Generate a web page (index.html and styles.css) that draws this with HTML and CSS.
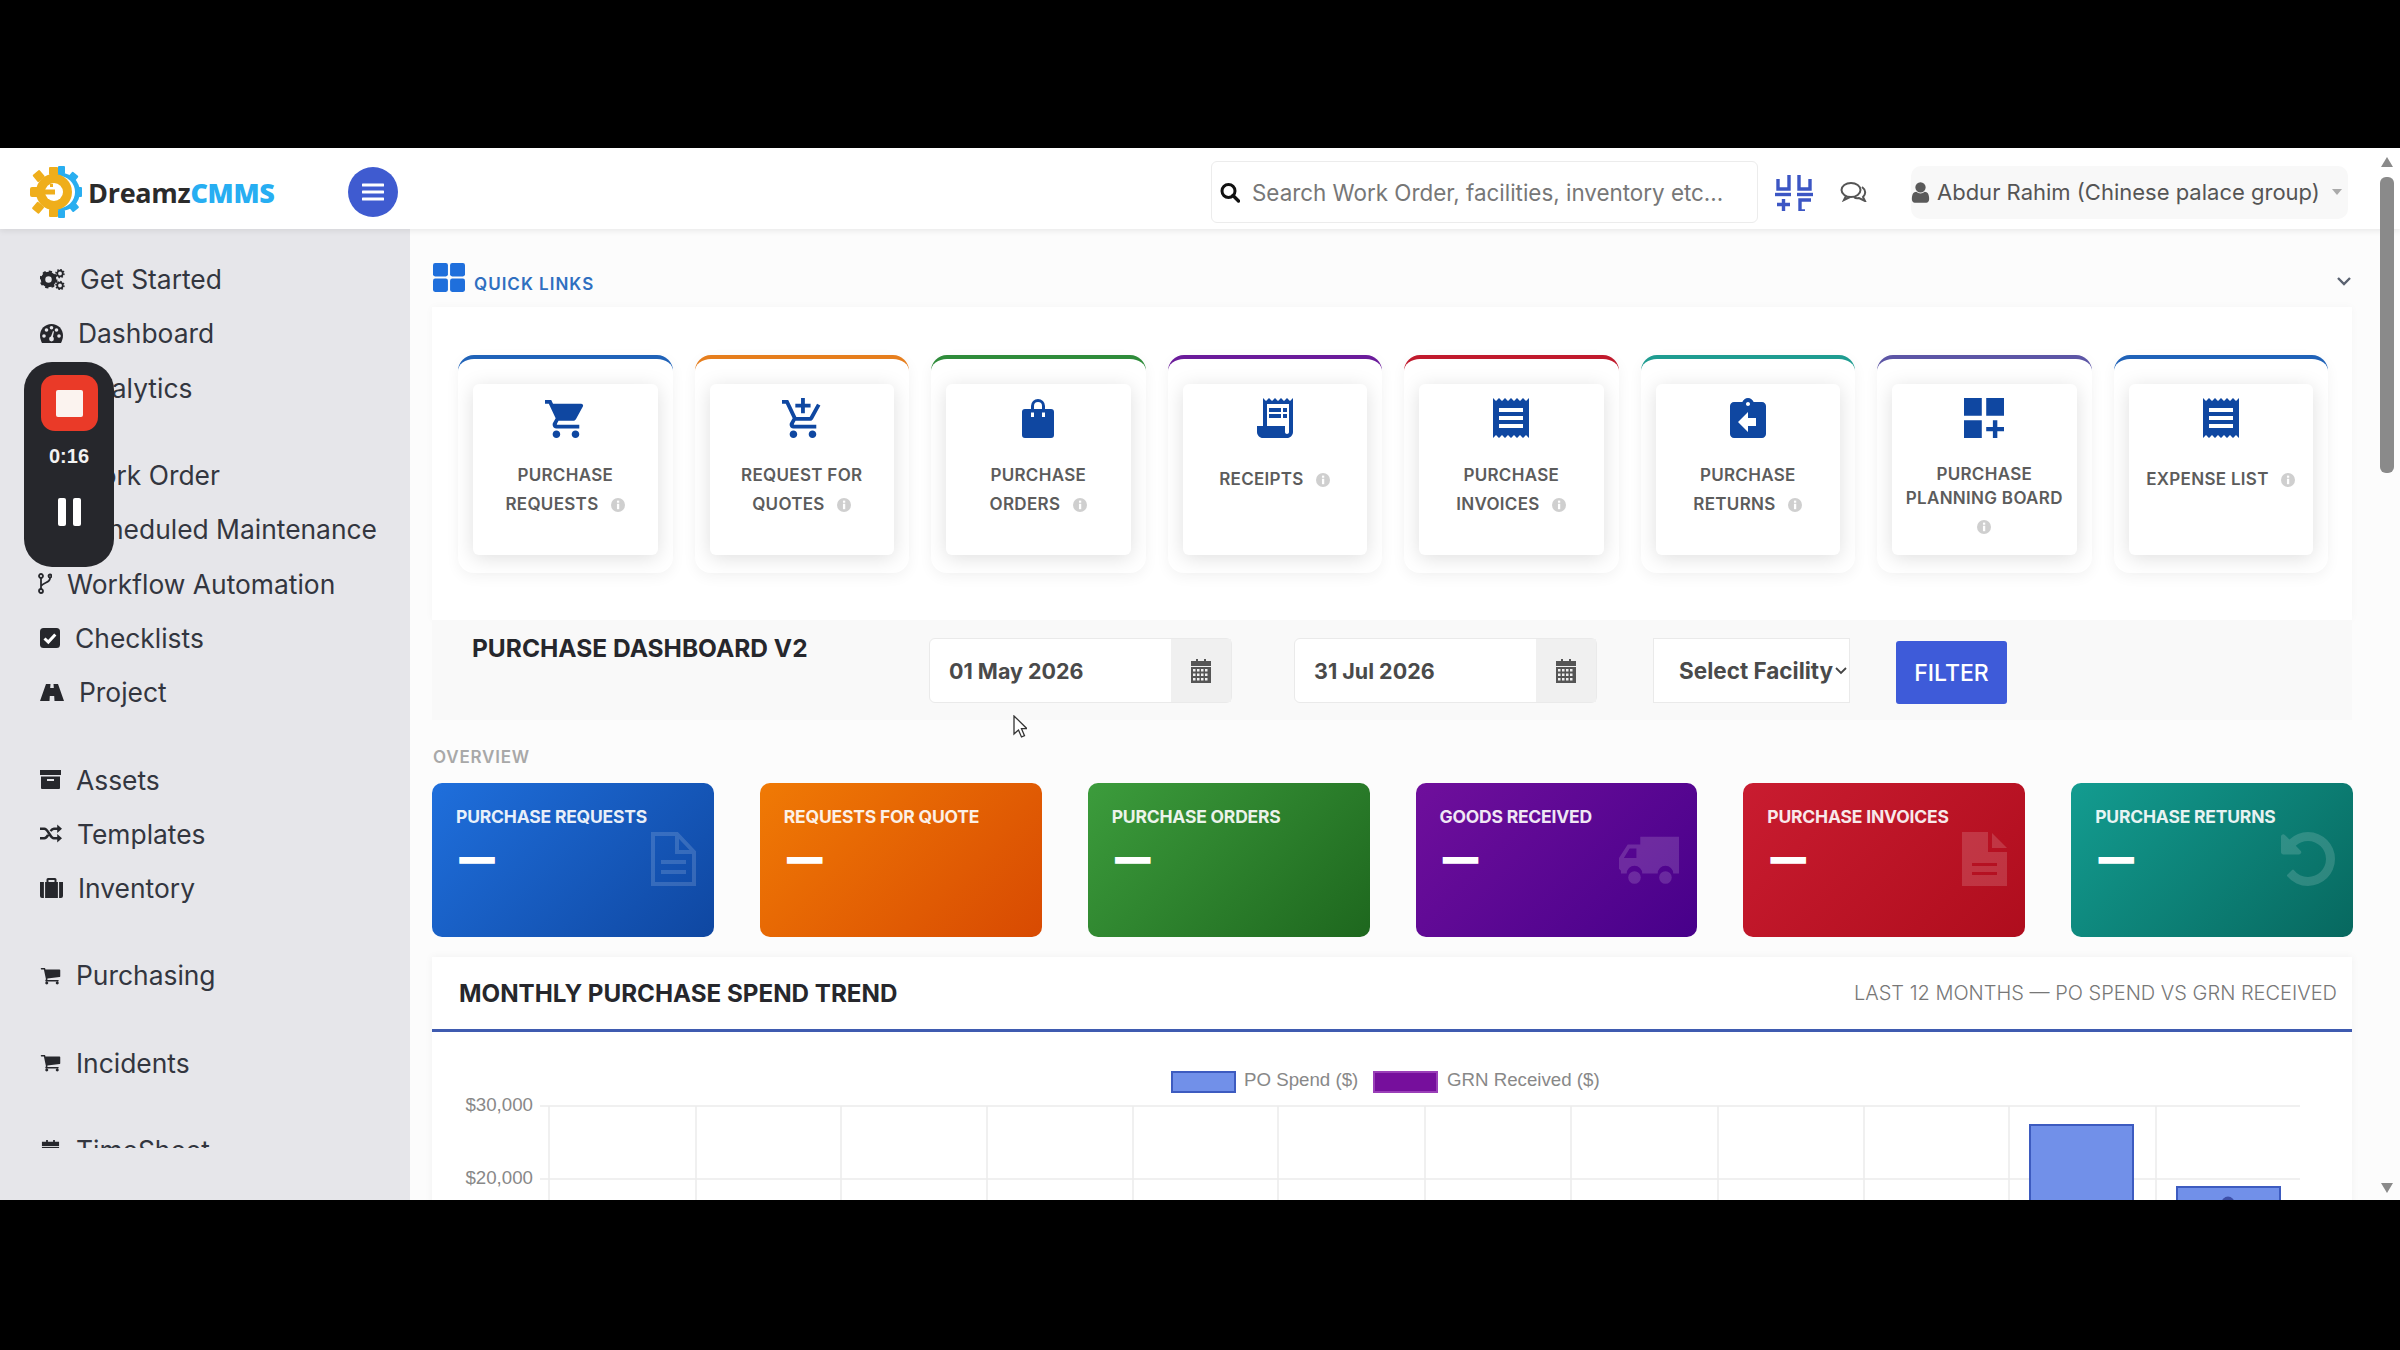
FILE: index.html
```html
<!DOCTYPE html>
<html lang="en">
<head>
  <meta charset="UTF-8" />
  <title>Purchase Dashboard</title>
  <link rel="stylesheet" href="styles.css">
</head>
<body>
  <svg class="sprite" width="0" height="0">
    <symbol id="i-info" viewBox="0 0 16 16">
      <circle cx="8" cy="8" r="8" fill="#cfcfcf"/>
      <rect x="6.8" y="3" width="2.6" height="2.4" fill="#fff"/>
      <rect x="6.8" y="6.6" width="2.6" height="6.2" fill="#fff"/>
    </symbol>
    <symbol id="i-receipt" viewBox="3 2 18 20">
      <path fill-rule="evenodd" d="M3 22l1.5-1.5L6 22l1.5-1.5L9 22l1.5-1.5L12 22l1.5-1.5L15 22l1.5-1.5L18 22l1.5-1.5L21 22V2l-1.5 1.5L18 2l-1.5 1.5L15 2l-1.5 1.5L12 2l-1.5 1.5L9 2 7.5 3.5 6 2 4.5 3.5 3 2v20zM18 7v2H6V7h12zm0 4v2H6v-2h12zm0 4v2H6v-2h12z"/>
    </symbol>
    <symbol id="i-cart" viewBox="0 0 1664 1792">
      <path d="M640 1536q0 52-38 90t-90 38-90-38-38-90 38-90 90-38 90 38 38 90zm896 0q0 52-38 90t-90 38-90-38-38-90 38-90 90-38 90 38 38 90zm128-1088v512q0 24-16.5 42.5t-40.5 21.5l-1044 122q13 60 13 70 0 16-24 64h920q26 0 45 19t19 45-19 45-45 19h-1024q-26 0-45-19t-19-45q0-11 8-31.5t16-36 21.5-40 15.5-29.5l-177-823h-204q-26 0-45-19t-19-45 19-45 45-19h256q16 0 28.5 6.5t19.5 15.5 13 24.5 8 26 5.5 29.5 4.5 26h1201q26 0 45 19t19 45z"/>
    </symbol>
    <symbol id="i-calendar" viewBox="0 0 20 24">
      <rect x="5" y="0" width="2" height="4"/>
      <rect x="13" y="0" width="2" height="4"/>
      <rect x="0" y="2" width="20" height="5"/>
      <path fill-rule="evenodd" d="M0 8h20v16H0zM2 10v2.500h2.500V10zm4 0v2.500h2.500V10zm4 0v2.500h2.500V10zm4 0v2.500h2.500V10zM2 14.500V17h2.500v-2.500zm4 0V17h2.500v-2.500zm4 0V17h2.500v-2.500zm4 0V17h2.500v-2.500zM2 19v2.500h2.500V19zm4 0v2.500h2.500V19zm4 0v2.500h2.500V19zm4 0v2.500h2.500V19z"/>
    </symbol>
  </svg>

  <div class="app">
    <header class="topbar">
      <div class="brand">
        <svg class="brand-mark" viewBox="0 0 52 52">
          <g fill="#29aef0">
            <circle cx="31" cy="26" r="19"/>
            <rect x="44" y="21" width="8" height="10" rx="1"/>
            <rect x="39" y="7" width="8" height="9" rx="1" transform="rotate(40 43 11)"/>
            <rect x="39" y="36" width="8" height="9" rx="1" transform="rotate(-40 43 40)"/>
            <rect x="28" y="0" width="7" height="8" rx="1"/>
            <rect x="28" y="44" width="7" height="8" rx="1"/>
          </g>
          <circle cx="29" cy="26" r="16" fill="#fff"/>
          <g fill="#efae1b">
            <circle cx="24" cy="26" r="18"/>
            <rect x="0" y="21" width="9" height="10" rx="2"/>
            <rect x="19" y="1" width="9" height="8" rx="1"/>
            <rect x="19" y="43" width="9" height="8" rx="1"/>
            <rect x="4" y="6" width="9" height="9" rx="1" transform="rotate(-40 8 10)"/>
            <rect x="4" y="37" width="9" height="9" rx="1" transform="rotate(40 8 41)"/>
          </g>
          <circle cx="24" cy="26" r="9" fill="#fff"/>
          <rect x="13" y="23.500" width="12" height="5" fill="#efae1b"/>
          <rect x="20" y="18" width="3" height="3" fill="#efae1b"/>
        </svg>
        <span class="brand-name">Dreamz<b>CMMS</b></span>
      </div>
      <button class="menu-toggle" type="button">
        <svg viewBox="0 0 22 18" width="22" height="18"><path d="M1 2h20M1 9h20M1 16h20" stroke="#fff" stroke-width="3" stroke-linecap="round"/></svg>
      </button>

      <div class="search-box">
        <svg class="search-icon" viewBox="0 0 20 20"><circle cx="8.500" cy="8.500" r="6.500" fill="none" stroke="#111" stroke-width="3"/><path d="M13 13l5.500 5.500" stroke="#111" stroke-width="3.400" stroke-linecap="round"/></svg>
        <span class="search-text">Search Work Order, facilities, inventory etc...</span>
      </div>

      <svg class="scan-icon" viewBox="0 0 38 37" fill="none" stroke="#3c56c4" stroke-width="3.400">
        <path d="M3 5v10h11V1"/>
        <path d="M24 1v14h11V5"/>
        <path d="M0 20.500h16"/>
        <path d="M22 20.500h16"/>
        <path d="M2 30.500h13M8.500 25v12"/>
        <path d="M36 26H25v11h5"/>
      </svg>
      <svg class="chat-icon" viewBox="0 0 28 20" fill="none" stroke="#555" stroke-width="2">
        <ellipse cx="11" cy="8" rx="9.500" ry="7"/>
        <path d="M6 14l-2 4 6-3"/>
        <path d="M22 5c4 3 4 7 1 10l2 4-6-3c-2 .5-4 0-5-1"/>
      </svg>

      <div class="user-menu">
        <svg class="user-icon" viewBox="192 128 1408 1536"><path fill="#5a5a5a" d="M1536 1399q0 109-62.500 187t-150.500 78h-854q-88 0-150.500-78t-62.500-187q0-85 8.500-160.500t31.500-151.500 58.500-130 94-88.500 134.500-34.500q131 128 313 128t313-128q76 0 134.500 34.500t94 88.500 58.500 130 31.500 151.500 8.500 160.500zm-256-887q0 159-112.500 271.500t-271.500 112.500-271.500-112.500-112.500-271.500 112.500-271.500 271.500-112.500 271.500 112.500 112.500 271.500z"/></svg>
        <span class="user-name">Abdur Rahim (Chinese palace group)</span>
        <span class="user-caret"></span>
      </div>
    </header>

    <div class="shell">
      <aside class="sidebar">
        <nav class="side-nav">
          <ul class="nav-group">
            <li>
              <svg class="nav-icon" width="25" height="21" viewBox="0 0 25 21">
                <circle cx="8.500" cy="10.500" r="5.500" fill="none" stroke="#26272c" stroke-width="4.500"/>
                <circle cx="8.500" cy="10.500" r="7.500" fill="none" stroke="#26272c" stroke-width="3" stroke-dasharray="3 2.900"/>
                <circle cx="20" cy="4.500" r="2.800" fill="none" stroke="#26272c" stroke-width="1.800"/>
                <circle cx="20" cy="4.500" r="4" fill="none" stroke="#26272c" stroke-width="1.500" stroke-dasharray="1.500 1.600"/>
                <circle cx="20" cy="16.500" r="2.800" fill="none" stroke="#26272c" stroke-width="1.800"/>
                <circle cx="20" cy="16.500" r="4" fill="none" stroke="#26272c" stroke-width="1.500" stroke-dasharray="1.500 1.600"/>
              </svg>
              Get Started
            </li>
            <li>
              <svg class="nav-icon" width="23" height="19" viewBox="0 0 23 19">
                <path fill="#26272c" d="M11.500 0C5 0 0 5 0 11.500c0 2.800.8 5 2 7.500h19c1.200-2.500 2-4.700 2-7.500C23 5 18 0 11.500 0z"/>
                <g fill="#e6e6ea">
                  <circle cx="4" cy="12" r="1.800"/><circle cx="6.500" cy="6" r="1.800"/><circle cx="11.500" cy="3.800" r="1.800"/><circle cx="16.500" cy="6" r="1.800"/><circle cx="19" cy="12" r="1.800"/>
                  <circle cx="11.500" cy="15" r="2.400"/>
                  <path d="M10.500 14l2.500-7 1 .4-1.500 7z"/>
                </g>
              </svg>
              Dashboard
            </li>
            <li>
              <svg class="nav-icon" width="23" height="19" viewBox="0 0 23 19"><path fill="#26272c" d="M1 0h3v19H1zM7 9h3v10H7zM13 4h3v15h-3zM19 11h3v8h-3z"/></svg>
              Analytics
            </li>
          </ul>

          <ul class="nav-group">
            <li>
              <svg class="nav-icon" width="21" height="21" viewBox="0 0 21 21"><rect x="1" y="3" width="19" height="18" fill="#26272c"/></svg>
              Work Order
            </li>
            <li>
              <svg class="nav-icon" width="21" height="21" viewBox="0 0 20 24" fill="#26272c"><use href="#i-calendar"/></svg>
              Scheduled Maintenance
            </li>
            <li class="nav-tight">
              <svg class="nav-icon" width="14" height="21" viewBox="0 0 14 21" fill="none" stroke="#26272c" stroke-width="1.800">
                <circle cx="3" cy="3" r="2"/><circle cx="3" cy="18" r="2"/><circle cx="12" cy="3" r="1.500"/>
                <path d="M3 5v11M12 5c0 5-6 4-9 8"/>
              </svg>
              Workflow Automation
            </li>
            <li>
              <svg class="nav-icon" width="20" height="20" viewBox="0 0 20 20">
                <rect width="20" height="20" rx="3.500" fill="#26272c"/>
                <path d="M4.500 10.500l3.800 3.600 7-7.600" fill="none" stroke="#fff" stroke-width="3"/>
              </svg>
              Checklists
            </li>
            <li>
              <svg class="nav-icon" width="24" height="17" viewBox="0 0 24 17">
                <path fill="#26272c" d="M6 0h4.500l-.3 4h3.600l-.3-4H18l6 17h-9.500l-.3-5h-4.400l-.3 5H0z"/>
              </svg>
              Project
            </li>
          </ul>

          <ul class="nav-group">
            <li>
              <svg class="nav-icon" width="21" height="19" viewBox="0 0 21 19">
                <rect width="21" height="5" fill="#26272c"/>
                <path fill="#26272c" d="M1 6.500h19V18a1 1 0 0 1-1 1H2a1 1 0 0 1-1-1z"/>
                <rect x="7" y="9" width="7" height="2" fill="#e6e6ea"/>
              </svg>
              Assets
            </li>
            <li>
              <svg class="nav-icon" width="22" height="19" viewBox="0 0 23 19" fill="none" stroke="#26272c" stroke-width="2.600">
                <path d="M0 4.500h4.500c4 0 6 10 10 10H19M0 14.500h4.500c1.600 0 3-1.600 4-3.500M11 7c1-1.400 2.200-2.500 3.500-2.500H19"/>
                <path fill="#26272c" stroke="none" d="M18 0l5 4.500-5 4.500zM18 10l5 4.500-5 4.500z"/>
              </svg>
              Templates
            </li>
            <li>
              <svg class="nav-icon" width="23" height="20" viewBox="0 0 23 20">
                <path fill="#26272c" d="M8 0h7a1.500 1.500 0 0 1 1.500 1.500V4H23v14a2 2 0 0 1-2 2H2a2 2 0 0 1-2-2V4h6.500V1.500A1.500 1.500 0 0 1 8 0zm.5 2v2h6V2z"/>
                <path d="M4.500 4v16M18.500 4v16" stroke="#e6e6ea" stroke-width="1.200"/>
              </svg>
              Inventory
            </li>
          </ul>

          <ul class="nav-group">
            <li><svg class="nav-icon" width="21" height="21" fill="#26272c"><use href="#i-cart"/></svg>Purchasing</li>
          </ul>
          <ul class="nav-group">
            <li><svg class="nav-icon" width="21" height="21" fill="#26272c"><use href="#i-cart"/></svg>Incidents</li>
          </ul>
          <ul class="nav-group">
            <li><svg class="nav-icon" width="21" height="21" viewBox="0 0 20 24" fill="#26272c"><use href="#i-calendar"/></svg>TimeSheet</li>
          </ul>
        </nav>
      </aside>

      <main class="content">
        <div class="quick-head">
          <svg class="quick-icon" viewBox="0 0 30 27" fill="#1f6fdc">
            <rect width="14" height="12.500" rx="2"/><rect x="16" width="14" height="12.500" rx="2"/>
            <rect y="14.500" width="14" height="12.500" rx="2"/><rect x="16" y="14.500" width="14" height="12.500" rx="2"/>
          </svg>
          <span class="quick-title">QUICK LINKS</span>
          <svg class="quick-chevron" viewBox="0 0 14 9" fill="none" stroke="#5a6270" stroke-width="2.400"><path d="M1 1l6 6 6-6"/></svg>
        </div>

        <section class="quick-panel">
          <div class="quick-card c-blue">
            <div class="quick-inner">
              <svg class="q-icon" viewBox="1 1 21 21"><path d="M7 18c-1.100 0-1.990.9-1.990 2S5.900 22 7 22s2-.9 2-2-.9-2-2-2zM1 2v2h2l3.600 7.590-1.350 2.450c-.16.28-.25.61-.25.96 0 1.100.9 2 2 2h12v-2H7.420c-.14 0-.25-.11-.25-.25l.03-.12.9-1.630h7.450c.75 0 1.410-.41 1.750-1.030l3.580-6.490c.08-.14.12-.31.12-.48 0-.55-.45-1-1-1H5.210l-.94-2H1zm16 16c-1.100 0-1.990.9-1.990 2s.89 2 1.990 2 2-.9 2-2-.9-2-2-2z"/></svg>
              <p class="q-label">PURCHASE<br>REQUESTS <svg class="q-info"><use href="#i-info"/></svg></p>
            </div>
          </div>
          <div class="quick-card c-orange">
            <div class="quick-inner">
              <svg class="q-icon" viewBox="1 1 21 21"><path d="M11 9h2V6h3V4h-3V1h-2v3H8v2h3v3zm-4 9c-1.100 0-1.990.9-1.990 2S5.900 22 7 22s2-.9 2-2-.9-2-2-2zm10 0c-1.100 0-1.990.9-1.990 2s.89 2 1.990 2 2-.9 2-2-.9-2-2-2zm-9.830-3.250l.03-.12.9-1.630h7.450c.75 0 1.410-.41 1.750-1.030l3.860-7.010L19.420 4h-.01l-1.100 2-2.760 5H8.530l-.13-.27L6.160 6l-.95-2-.94-2H1v2h2l3.600 7.590-1.350 2.450c-.16.28-.25.61-.25.96 0 1.100.9 2 2 2h12v-2H7.420c-.13 0-.25-.11-.25-.25z"/></svg>
              <p class="q-label">REQUEST FOR<br>QUOTES <svg class="q-info"><use href="#i-info"/></svg></p>
            </div>
          </div>
          <div class="quick-card c-green">
            <div class="quick-inner">
              <svg class="q-icon" viewBox="0 0 32 40">
                <path fill-rule="evenodd" d="M3 11h6V8a7 7 0 0 1 14 0v3h6a3 3 0 0 1 3 3v23a3 3 0 0 1-3 3H3a3 3 0 0 1-3-3V14a3 3 0 0 1 3-3zm9 0h8V8a4 4 0 0 0-8 0zm-3 3.500v4.500h3v-4.500zm11 0v4.500h3v-4.500z"/>
              </svg>
              <p class="q-label">PURCHASE<br>ORDERS <svg class="q-info"><use href="#i-info"/></svg></p>
            </div>
          </div>
          <div class="quick-card c-purple">
            <div class="quick-inner">
              <svg class="q-icon" viewBox="3 2 18 20"><path d="M19.500 3.500 18 2l-1.500 1.500L15 2l-1.500 1.500L12 2l-1.500 1.500L9 2 7.500 3.500 6 2v14H3v3c0 1.660 1.340 3 3 3h12c1.660 0 3-1.340 3-3V2l-1.500 1.500zM19 19c0 .55-.45 1-1 1s-1-.45-1-1v-3H8V5h11v14z"/><path d="M9 7h6v2H9zM16 7h2v2h-2zM9 10h6v2H9zM16 10h2v2h-2z"/></svg>
              <p class="q-label q-single">RECEIPTS <svg class="q-info"><use href="#i-info"/></svg></p>
            </div>
          </div>
          <div class="quick-card c-red">
            <div class="quick-inner">
              <svg class="q-icon"><use href="#i-receipt"/></svg>
              <p class="q-label">PURCHASE<br>INVOICES <svg class="q-info"><use href="#i-info"/></svg></p>
            </div>
          </div>
          <div class="quick-card c-teal">
            <div class="quick-inner">
              <svg class="q-icon" viewBox="3 1 18 20"><path d="M19 3h-4.180C14.400 1.840 13.300 1 12 1c-1.300 0-2.400.84-2.820 2H5c-1.100 0-2 .9-2 2v14c0 1.100.9 2 2 2h14c1.100 0 2-.9 2-2V5c0-1.100-.9-2-2-2zm-7 0c.55 0 1 .45 1 1s-.45 1-1 1-1-.45-1-1 .45-1 1-1zm4 12h-4v3l-5-5 5-5v3h4v4z"/></svg>
              <p class="q-label">PURCHASE<br>RETURNS <svg class="q-info"><use href="#i-info"/></svg></p>
            </div>
          </div>
          <div class="quick-card c-indigo">
            <div class="quick-inner">
              <svg class="q-icon" viewBox="3 3 18 18"><path d="M3 3h8v8H3zm10 0h8v8h-8zM3 13h8v8H3zm15 0h-2v3h-3v2h3v3h2v-3h3v-2h-3z"/></svg>
              <p class="q-label q-planning">PURCHASE<br>PLANNING BOARD <svg class="q-info"><use href="#i-info"/></svg></p>
            </div>
          </div>
          <div class="quick-card c-blue">
            <div class="quick-inner">
              <svg class="q-icon"><use href="#i-receipt"/></svg>
              <p class="q-label q-single">EXPENSE LIST <svg class="q-info"><use href="#i-info"/></svg></p>
            </div>
          </div>
        </section>

        <section class="filter-strip">
          <h2 class="filter-title">PURCHASE DASHBOARD V2</h2>
          <div class="date-field">
            <span class="date-value">01 May 2026</span>
            <span class="date-addon"><svg class="cal-icon"><use href="#i-calendar"/></svg></span>
          </div>
          <div class="date-field date-field-2">
            <span class="date-value">31 Jul 2026</span>
            <span class="date-addon"><svg class="cal-icon"><use href="#i-calendar"/></svg></span>
          </div>
          <div class="select-field">
            <span>Select Facility</span>
            <svg viewBox="0 0 12 8" width="12" height="8" fill="none" stroke="#444" stroke-width="1.800"><path d="M1 1l5 5 5-5"/></svg>
          </div>
          <button class="filter-btn" type="button">FILTER</button>
        </section>

        <div class="section-label">OVERVIEW</div>

        <section class="stat-row">
          <div class="stat-card s-blue">
            <div class="stat-title">PURCHASE REQUESTS</div>
            <div class="stat-value">—</div>
            <svg class="stat-bg bg-doc" viewBox="0 0 45 54" fill="none" stroke="#fff" stroke-width="4">
              <path d="M2 2h24l17 18v32H2z"/><path d="M26 2v18h17"/><path d="M10 30h25M10 40h25"/>
            </svg>
          </div>
          <div class="stat-card s-orange">
            <div class="stat-title">REQUESTS FOR QUOTE</div>
            <div class="stat-value">—</div>
          </div>
          <div class="stat-card s-green">
            <div class="stat-title">PURCHASE ORDERS</div>
            <div class="stat-value">—</div>
          </div>
          <div class="stat-card s-purple">
            <div class="stat-title">GOODS RECEIVED</div>
            <div class="stat-value">—</div>
            <svg class="stat-bg bg-truck" viewBox="0 0 62 50" fill="#fff">
              <path fill-rule="evenodd" d="M22 0h40v38h-6a8 8 0 0 0-16 0H24a8 8 0 0 0-16 0H2v-3L0 33V22L9 8h13zM11 12L5 22h13V12z"/>
              <circle cx="16" cy="42" r="6.500"/><circle cx="48" cy="42" r="6.500"/>
            </svg>
          </div>
          <div class="stat-card s-red">
            <div class="stat-title">PURCHASE INVOICES</div>
            <div class="stat-value">—</div>
            <svg class="stat-bg bg-doc" viewBox="0 0 45 54" fill="#fff">
              <path fill-rule="evenodd" d="M0 0h26v20h19v34H0zM10 31v3h25v-3zM10 40v3h25v-3z"/>
              <path d="M30 1l15 15H30z"/>
            </svg>
          </div>
          <div class="stat-card s-teal">
            <div class="stat-title">PURCHASE RETURNS</div>
            <div class="stat-value">—</div>
            <svg class="stat-bg bg-undo" viewBox="128 128 1536 1536" fill="#fff">
              <path d="M1664 896q0 156-61 298t-164 245-245 164-298 61q-172 0-327-72.500t-264-204.500q-7-10-6.500-22.500t8.500-20.500l137-138q10-9 25-9 16 2 23 12 73 95 179 147t225 52q104 0 198.500-40.500t163.500-109.500 109.500-163.500 40.500-198.500-40.500-198.500-109.500-163.500-163.500-109.500-198.500-40.500q-98 0-188 35.500t-160 101.500l137 138q31 30 14 69-17 40-59 40h-448q-26 0-45-19t-19-45v-448q0-42 40-59 39-17 69 14l130 129q107-101 244.500-156.500t284.500-55.500q156 0 298 61t245 164 164 245 61 298z"/>
            </svg>
          </div>
        </section>

        <section class="chart-card">
          <div class="chart-head">
            <h3 class="chart-title">MONTHLY PURCHASE SPEND TREND</h3>
            <span class="chart-sub">LAST 12 MONTHS — PO SPEND VS GRN RECEIVED</span>
          </div>
          <svg class="chart" viewBox="432 1032 1920 168">
            <g stroke="#ececec" stroke-width="1.500">
              <path d="M540 1106H2300M540 1179H2300"/>
              <path d="M549 1106V1200M696 1106V1200M841 1106V1200M987 1106V1200M1133 1106V1200M1278 1106V1200M1425 1106V1200M1571 1106V1200M1718 1106V1200M1864 1106V1200M2009 1106V1200M2156 1106V1200"/>
            </g>
            <rect x="1172" y="1072" width="63" height="20" fill="#7190e9" stroke="#3d5bc0" stroke-width="2"/>
            <text class="chart-text" x="1244" y="1086">PO Spend ($)</text>
            <rect x="1374" y="1072" width="63" height="20" fill="#760f9c" stroke="#9a3fb8" stroke-width="2"/>
            <text class="chart-text" x="1447" y="1086">GRN Received ($)</text>
            <text class="chart-text" x="533" y="1111" text-anchor="end">$30,000</text>
            <text class="chart-text" x="533" y="1184" text-anchor="end">$20,000</text>
            <rect x="2030" y="1125" width="103" height="80" fill="#7190e9" stroke="#3d5bc0" stroke-width="2"/>
            <rect x="2177" y="1187" width="103" height="20" fill="#7190e9" stroke="#3d5bc0" stroke-width="2"/>
            <circle cx="2228" cy="1203" r="6.500" fill="#3d4fa8"/>
          </svg>
        </section>
      </main>
    </div>

    <div class="scrollbar">
      <span class="arrow-up"></span>
      <span class="thumb"></span>
      <span class="arrow-down"></span>
    </div>

    <svg class="cursor" viewBox="0 0 14 24"><path d="M1 1v18l4.500-4 3 7 3-1.300-3-7H14z" fill="#fff" stroke="#333" stroke-width="1.300"/></svg>

    <div class="recorder">
      <span class="rec-stop"><i></i></span>
      <span class="rec-time">0:16</span>
      <span class="rec-pause"><i></i><i></i></span>
    </div>
  </div>
</body>
</html>
```

FILE: styles.css
```css
html, body {
  margin: 0;
  padding: 0;
  height: 1350px;
  background-color: #000;
  overflow: hidden;
  font-family: Inter, 'Noto Sans', sans-serif;
}

.sprite {
  position: absolute;
}

.app {
  position: relative;
  display: flex;
  flex-direction: column;
  margin-top: 148px;
  height: 1052px;
  background-color: #fcfcfc;
  overflow: hidden;
}

/* top bar */
.topbar {
  display: flex;
  align-items: center;
  flex: 0 0 81px;
  box-sizing: border-box;
  padding: 7px 0 0 30px;
  background-color: #fff;
  box-shadow: 0 2px 6px rgba(0, 0, 0, 0.08);
  z-index: 2;
}

.brand {
  display: flex;
  align-items: center;
  width: 318px;
}

.brand-mark {
  width: 52px;
  height: 52px;
  margin-right: 6px;
}

.brand-name {
  font-family: 'Open Sans', sans-serif;
  font-size: 27px;
  font-weight: 700;
  letter-spacing: -0.3px;
  color: #2b2b2b;
}

.brand-name b {
  color: #27aef2;
}

.menu-toggle {
  display: flex;
  align-items: center;
  justify-content: center;
  width: 50px;
  height: 50px;
  padding: 0;
  border: none;
  border-radius: 50%;
  background-color: #3f5bd0;
}

.search-box {
  display: flex;
  align-items: center;
  gap: 12px;
  width: 547px;
  height: 62px;
  box-sizing: border-box;
  margin-left: 813px;
  padding-left: 8px;
  border: 1px solid #ececec;
  border-radius: 6px;
}

.search-icon {
  width: 20px;
  height: 21px;
}

.search-text {
  font-size: 22.400px;
  color: #777;
  white-space: nowrap;
}

.scan-icon {
  width: 38px;
  height: 37px;
  margin-left: 17px;
}

.chat-icon {
  width: 28px;
  height: 20px;
  margin-left: 27px;
}

.user-menu {
  display: flex;
  align-items: center;
  width: 437px;
  height: 53px;
  box-sizing: border-box;
  margin-left: 43px;
  border-radius: 10px;
  background-color: #f8f8f8;
}

.user-icon {
  flex: none;
  width: 19px;
  height: 21px;
  margin-right: 7px;
}

.user-name {
  font-size: 22px;
  color: #555;
  white-space: nowrap;
}

.user-caret {
  width: 0;
  height: 0;
  margin-left: 12px;
  border-left: 5px solid transparent;
  border-right: 5px solid transparent;
  border-top: 6px solid #aaa;
}

/* page body */
.shell {
  display: flex;
  flex: 1;
  min-height: 0;
}

.sidebar {
  flex: 0 0 410px;
  background-color: #e6e6ea;
}

.side-nav {
  height: 919px;
  box-sizing: border-box;
  padding-top: 23px;
  overflow: hidden;
}

.nav-group {
  margin: 0 0 33px;
  padding: 0;
  list-style: none;
}

.nav-group li {
  display: flex;
  align-items: center;
  gap: 15px;
  height: 54.300px;
  padding-left: 40px;
  font-size: 26.400px;
  color: #33363f;
  white-space: nowrap;
}

.nav-group .nav-tight {
  padding-left: 38px;
}

.nav-icon {
  flex: none;
}

.content {
  width: 1920px;
  margin-left: 22px;
}

/* quick links */
.quick-head {
  display: flex;
  align-items: flex-end;
  height: 29px;
  padding: 34px 0 15px;
}

.quick-icon {
  width: 32px;
  height: 29px;
  margin-left: 1px;
  margin-right: 9px;
}

.quick-title {
  font-size: 17px;
  font-weight: 600;
  line-height: 15px;
  letter-spacing: 1px;
  color: #2f6fc0;
}

.quick-chevron {
  width: 14px;
  height: 9px;
  margin-left: auto;
  margin-right: 1px;
  margin-bottom: 6px;
}

.quick-panel {
  display: grid;
  grid-template-columns: repeat(8, 1fr);
  gap: 22px;
  height: 313px;
  box-sizing: border-box;
  padding: 48px 24px 0 26px;
  background-color: #fff;
  box-shadow: 0 0 8px rgba(0, 0, 0, 0.03);
}

.quick-card {
  height: 218px;
  box-sizing: border-box;
  padding: 25px 15px 18px;
  border-top: 4px solid;
  border-radius: 16px;
  box-shadow: 0 4px 14px rgba(0, 0, 0, 0.05);
}

.c-blue { border-color: #1f62b8; }
.c-orange { border-color: #e67e1d; }
.c-green { border-color: #2e8b3a; }
.c-purple { border-color: #6a1b9a; }
.c-red { border-color: #c0192c; }
.c-teal { border-color: #1e9c90; }
.c-indigo { border-color: #5c55a5; }

.quick-inner {
  display: flex;
  flex-direction: column;
  align-items: center;
  height: 171px;
  box-sizing: border-box;
  padding-top: 14px;
  background-color: #fff;
  border-radius: 6px;
  box-shadow: 0 3px 20px rgba(0, 0, 0, 0.13);
  fill: #0f47a1;
}

.q-icon {
  flex: none;
  width: 40px;
  height: 40px;
}

.q-label {
  margin: 23px 0 0;
  font-size: 17px;
  font-weight: 600;
  line-height: 29px;
  letter-spacing: 0.3px;
  text-align: center;
  color: #5c5c5c;
}

.q-single {
  margin-top: 27px;
}

.q-planning {
  margin-top: 24px;
  line-height: 24px;
}

.q-info {
  width: 14px;
  height: 14px;
  margin-left: 8px;
  vertical-align: -2px;
}

.q-planning .q-info {
  display: block;
  margin: 10px auto 0;
}

/* filter strip */
.filter-strip {
  display: flex;
  align-items: flex-start;
  height: 100px;
  box-sizing: border-box;
  padding: 18px 0 0 40px;
  background-color: #f9f9f9;
}

.filter-title {
  width: 457px;
  margin: 0;
  font-size: 24.500px;
  font-weight: 700;
  line-height: 20px;
  color: #26272c;
}

.date-field {
  display: flex;
  align-items: stretch;
  width: 303px;
  height: 65px;
  box-sizing: border-box;
  background-color: #fff;
  border: 1px solid #eaeaea;
  border-radius: 6px;
}

.date-field-2 {
  margin-left: 62px;
}

.date-value {
  flex: 1;
  align-self: center;
  padding-left: 19px;
  font-size: 21.500px;
  font-weight: 700;
  color: #4a4a4a;
}

.date-addon {
  display: flex;
  align-items: center;
  justify-content: center;
  width: 60px;
  background-color: #f0f0f0;
}

.cal-icon {
  width: 20px;
  height: 24px;
  fill: #555;
}

.select-field {
  display: flex;
  align-items: center;
  width: 197px;
  height: 65px;
  box-sizing: border-box;
  margin-left: 56px;
  padding-left: 25px;
  gap: 2px;
  background-color: #fff;
  border: 1px solid #eaeaea;
  font-size: 22.500px;
  font-weight: 700;
  color: #4a4a4a;
  white-space: nowrap;
}

.filter-btn {
  width: 111px;
  height: 63px;
  margin-left: 46px;
  margin-top: 3px;
  padding: 0;
  border: none;
  border-radius: 3px;
  background-color: #3e5bd9;
  font-family: inherit;
  font-size: 23px;
  font-weight: 500;
  color: #fff;
}

/* overview */
.section-label {
  height: 63px;
  box-sizing: border-box;
  padding: 28px 0 0 1px;
  font-size: 17px;
  font-weight: 600;
  line-height: 18px;
  letter-spacing: 0.800px;
  color: #a8a8a8;
}

.stat-row {
  display: grid;
  grid-template-columns: repeat(6, 1fr);
  gap: 46px;
  margin-right: -1px;
}

.stat-card {
  position: relative;
  height: 154px;
  box-sizing: border-box;
  padding: 25px 24px 0;
  border-radius: 10px;
  color: #fff;
}

.s-blue { background: linear-gradient(135deg, #1f6fdc, #0f47a1); }
.s-orange { background: linear-gradient(135deg, #f07a05, #d84a02); }
.s-green { background: linear-gradient(135deg, #3c9c3c, #1e671e); }
.s-purple { background: linear-gradient(135deg, #6f0f9c, #47008a); }
.s-red { background: linear-gradient(135deg, #c91c30, #af0d1d); }
.s-teal { background: linear-gradient(135deg, #139c90, #07685f); }

.stat-title {
  font-size: 17.500px;
  font-weight: 700;
  line-height: 18px;
  letter-spacing: -0.2px;
  opacity: 0.9;
  white-space: nowrap;
}

.stat-value {
  margin-top: 12px;
  margin-left: 5px;
  font-family: 'Liberation Sans', sans-serif;
  font-size: 32px;
  font-weight: 700;
  line-height: 40px;
  -webkit-text-stroke: 3.500px #fff;
}

.stat-bg {
  position: absolute;
  right: 18px;
  opacity: 0.15;
}

.bg-doc {
  top: 49px;
  width: 45px;
  height: 54px;
}

.bg-truck {
  top: 53px;
  width: 60px;
  height: 50px;
}

.bg-undo {
  top: 49px;
  width: 54px;
  height: 54px;
}

/* chart */
.chart-card {
  height: 300px;
  margin-top: 20px;
  background-color: #fff;
  box-shadow: 0 0 8px rgba(0, 0, 0, 0.05);
}

.chart-head {
  display: flex;
  align-items: center;
  justify-content: space-between;
  height: 72px;
  padding: 0 15px 0 27px;
  border-bottom: 3px solid #3f5bb0;
}

.chart-title {
  margin: 0;
  font-size: 24.200px;
  font-weight: 700;
  color: #26272c;
}

.chart-sub {
  font-size: 20px;
  font-weight: 300;
  color: #777;
}

.chart {
  display: block;
  width: 1920px;
  height: 168px;
}

.chart-text {
  font-family: 'Liberation Sans', sans-serif;
  font-size: 18.700px;
  fill: #888;
}

/* floating bits */
.scrollbar {
  position: absolute;
  top: 0;
  right: 5px;
  bottom: 0;
  width: 15px;
  z-index: 3;
}

.arrow-up,
.arrow-down {
  position: absolute;
  left: 1px;
  width: 0;
  height: 0;
  border-left: 6.500px solid transparent;
  border-right: 6.500px solid transparent;
}

.arrow-up {
  top: 9px;
  border-bottom: 10px solid #8a8a8a;
}

.arrow-down {
  bottom: 7px;
  border-top: 10px solid #8a8a8a;
}

.thumb {
  position: absolute;
  top: 29px;
  left: 0;
  width: 14px;
  height: 296px;
  border-radius: 6px;
  background-color: #8a8a8a;
}

.cursor {
  position: absolute;
  left: 1013px;
  top: 567px;
  width: 14px;
  height: 24px;
}

.recorder {
  position: absolute;
  left: 24px;
  top: 214px;
  display: flex;
  flex-direction: column;
  align-items: center;
  width: 90px;
  height: 205px;
  box-sizing: border-box;
  padding-top: 13px;
  border-radius: 28px;
  background-color: #26272c;
  z-index: 4;
}

.rec-stop {
  display: flex;
  align-items: center;
  justify-content: center;
  width: 57px;
  height: 56px;
  border-radius: 14px;
  background-color: #ea3a28;
}

.rec-stop i {
  width: 27px;
  height: 27px;
  border-radius: 2px;
  background-color: #fbf3ef;
}

.rec-time {
  margin-top: 14px;
  font-family: 'Liberation Sans', sans-serif;
  font-size: 20px;
  font-weight: 700;
  color: #f2f2f2;
}

.rec-pause {
  display: flex;
  gap: 7px;
  margin-top: 30px;
}

.rec-pause i {
  width: 8px;
  height: 28px;
  border-radius: 2px;
  background-color: #fff;
}
```
